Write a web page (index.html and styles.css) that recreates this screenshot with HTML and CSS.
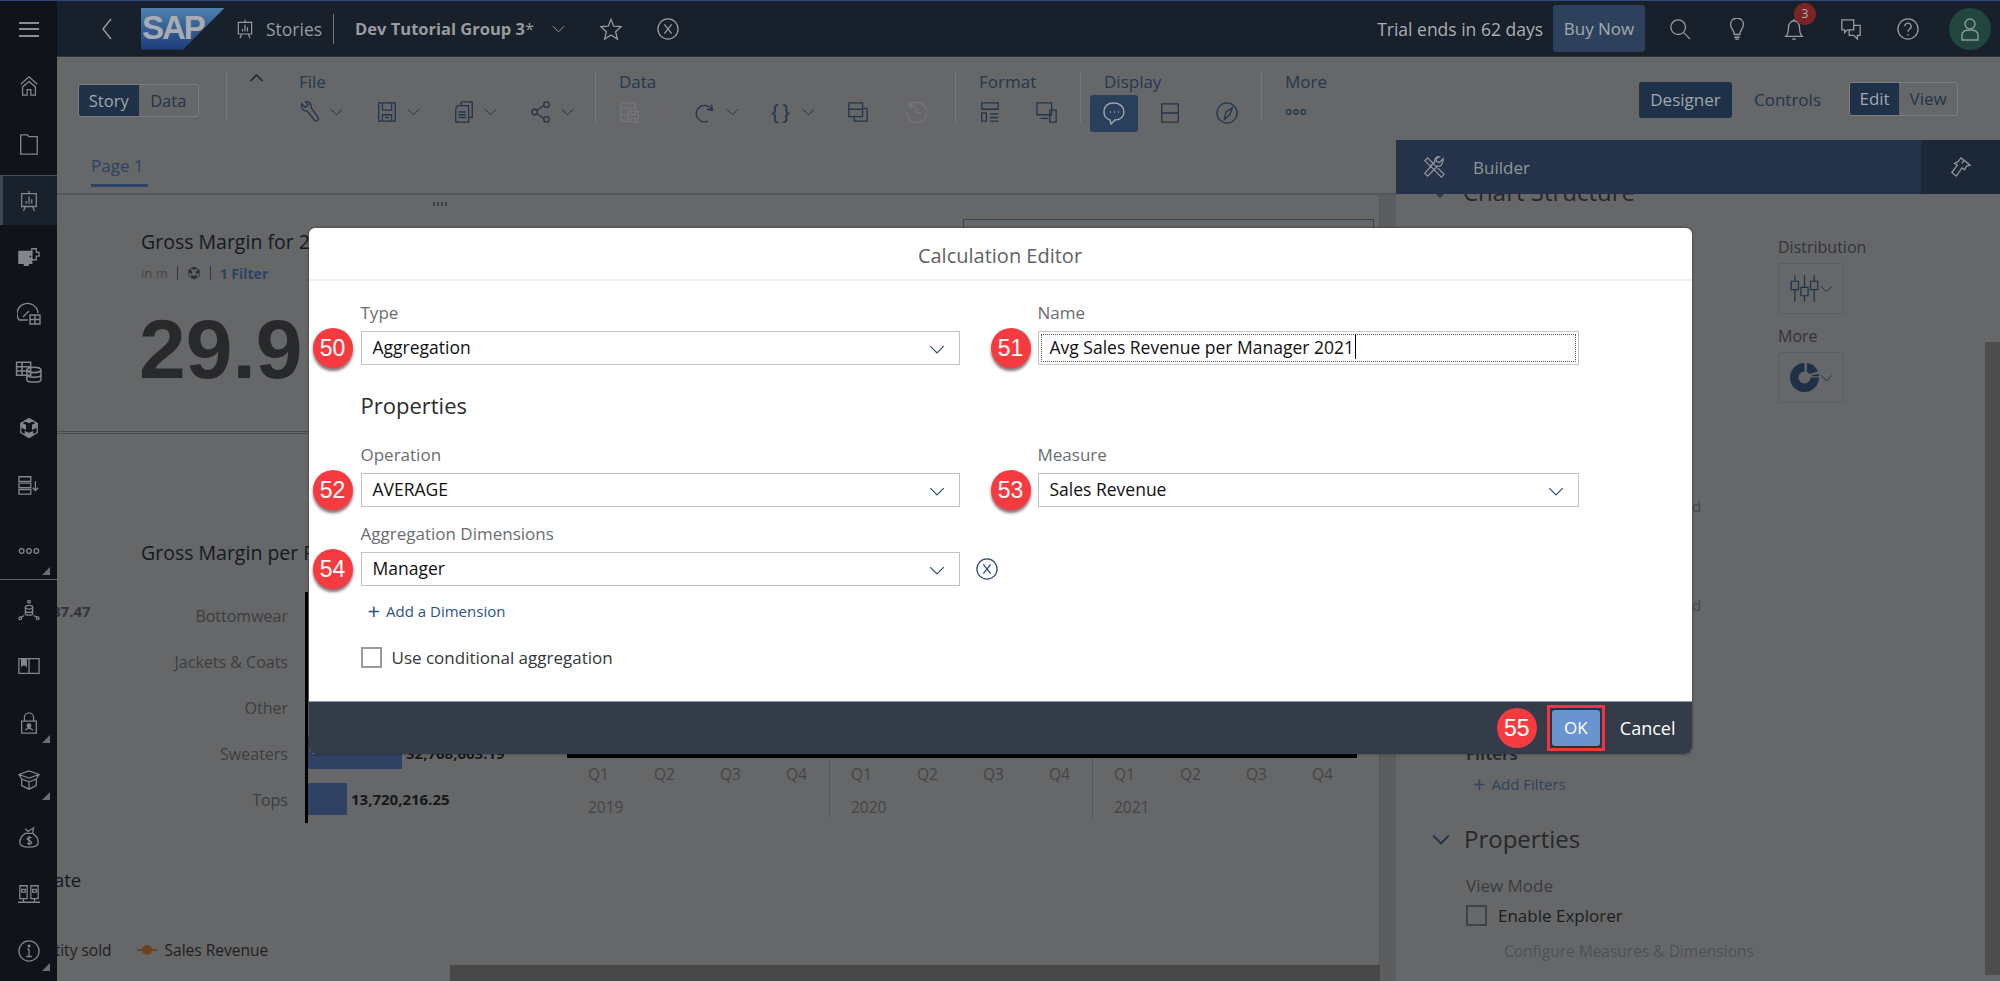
FILE: index.html
```html
<!DOCTYPE html>
<html lang="en">

<head>
    <meta charset="UTF-8">
    <title>Calculation Editor</title>
    <link rel="stylesheet" href="styles.css">
</head>

<body>
    <svg class="sprite" xmlns="http://www.w3.org/2000/svg">
        <symbol id="i-home" viewBox="0 0 24 24"><path d="M12 2 3 10M12 2l9 8M12 7l-7 6v9h5v-6h4v6h5v-9z"/></symbol>
        <symbol id="i-folder" viewBox="0 0 24 24"><path d="M3 2h7l2 2h9v19H3z"/></symbol>
        <symbol id="i-story" viewBox="0 0 24 24"><path d="M12 1v3M4 4h16v14H4zM8 18l-2 5M16 18l2 5M9 15v-3M12 15V7M15 15v-5"/></symbol>
        <symbol id="i-puzzle" viewBox="0 0 24 24"><path class="fill" d="M1 6h14v4h-3v3h3v6h-4v2H7v-2H1z"/><path d="M15 3h5v4h3v4h-3v4h-5z"/></symbol>
        <symbol id="i-gauge" viewBox="0 0 24 24"><path d="M2 18a10.500 10.500 0 1 1 19-7M2 18h9M6 15l6-6"/><path d="M13 13h10v9H13zM13 17.500h10M18 13v9"/></symbol>
        <symbol id="i-table" viewBox="0 0 24 24"><path d="M1 4h13v12H1zM1 8h13M1 12h13M6 4v12"/><ellipse cx="17" cy="11" rx="6.500" ry="2.500"/><path d="M10.500 11v9c0 3 13 3 13 0v-9M10.500 15.500c0 3 13 3 13 0"/></symbol>
        <symbol id="i-cube" viewBox="0 0 24 24"><path class="fill" d="M12 2l4 2-4 2-4-2zM4 7l4 2v4l-4-2zM20 7l-4 2v4l4-2zM12 18l4-2v4l-4 2zM12 18l-4-2v4l4 2z"/><path d="M12 2l9 5v10l-9 5-9-5V7z"/></symbol>
        <symbol id="i-list" viewBox="0 0 24 24"><path d="M1 3h13v5H1zM1 10h13v5H1zM1 17h13v5H1zM19 8v10M16 15l3 3 3-3"/></symbol>
        <symbol id="i-dots" viewBox="0 0 24 24"><circle cx="4" cy="12" r="2.500"/><circle cx="12" cy="12" r="2.500"/><circle cx="20" cy="12" r="2.500"/></symbol>
        <symbol id="i-net" viewBox="0 0 24 24"><circle cx="12" cy="3" r="1.500"/><ellipse cx="12" cy="9" rx="4" ry="2"/><path d="M8 9v7c0 2 8 2 8 0V9M8 13c0 2 8 2 8 0M7 18l-4 2M17 18l4 2"/><circle cx="2.500" cy="21" r="1.500"/><circle cx="21.500" cy="21" r="1.500"/></symbol>
        <symbol id="i-book" viewBox="0 0 24 24"><path d="M1 4h22v16H1zM12 4v16"/><path class="fill" d="M4 4h5v8l-2.500-2L4 12z"/></symbol>
        <symbol id="i-lock" viewBox="0 0 24 24"><path d="M4 10h16v13H4zM7 10V6a5 5 0 0 1 10 0v4"/><circle class="fill" cx="12" cy="15" r="2"/><path d="M8 20c1-3 7-3 8 0"/></symbol>
        <symbol id="i-box" viewBox="0 0 24 24"><path d="M12 2 1 6l11 4 11-4zM1 6l3 5 8 3 8-3 3-5M4 11v7l8 4 8-4v-7M12 14v8"/></symbol>
        <symbol id="i-money" viewBox="0 0 24 24"><path d="M8 8C3 11 2 15 2 18c0 3 4 5 10 5s10-2 10-5c0-3-1-7-6-10zM8 8h8M8 3l3 3 6-4-1 6M15 13c-1-1-5-1-5 1s5 2 5 4-4 2-5 1M12 11v10"/></symbol>
        <symbol id="i-split" viewBox="0 0 24 24"><path d="M2 3h8v14H2zM14 3h8v14h-8zM4 7h4v3H4zM16 7h4v3h-4zM6 17v4M18 17v4M0 21h24"/></symbol>
        <symbol id="i-info" viewBox="0 0 24 24"><circle cx="12" cy="12" r="11"/><path d="M12 10v8M9 18h6M10 10h2"/><circle class="fill" cx="12" cy="6.500" r="1"/></symbol>
        <symbol id="i-chev" viewBox="0 0 14 8"><path d="M1 1l6 6 6-6"/></symbol>
        <symbol id="i-back" viewBox="0 0 12 22"><path d="M10 1 2 11l8 10"/></symbol>
        <symbol id="i-star" viewBox="0 0 24 24"><path d="M12 1.500l3 7.500 8 .5-6 5.500 2 8-7-4.500L5 23l2-8-6-5.500 8-.5z"/></symbol>
        <symbol id="i-xc" viewBox="0 0 24 24"><circle cx="12" cy="12" r="11"/><path d="M8 7l8 10M16 7L8 17"/></symbol>
        <symbol id="i-wrench" viewBox="0 0 24 24"><path d="M3 3l4 4 3-3-3-3c4-1 7 2 6 6l8 11c1 2-2 5-4 3L9 11C5 12 2 7 3 3z"/></symbol>
        <symbol id="i-save" viewBox="0 0 24 24"><path d="M3 2h18v20H3zM7 2v8h10V2M7 22v-7h10v7M10 18h4"/></symbol>
        <symbol id="i-copy" viewBox="0 0 24 24"><path d="M9 5V1h12v17h-4M5 5h12v18H3V8zM6 12h8M6 15h8M6 18h8"/></symbol>
        <symbol id="i-share" viewBox="0 0 24 24"><circle cx="18" cy="4" r="3"/><circle cx="5" cy="12" r="3"/><circle cx="18" cy="20" r="3"/><path d="M8 10l7-5M8 14l7 5"/></symbol>
        <symbol id="i-db" viewBox="0 0 24 24"><ellipse cx="10" cy="5" rx="8" ry="3"/><path d="M2 5v14c0 3 6 4 8 3M2 12c0 3 6 4 8 3M18 5v4M10 11h11v12H10zM13 11v4h5v-4M13 23v-4h5v4"/></symbol>
        <symbol id="i-refresh" viewBox="0 0 24 24"><path d="M18 4l1 6-6-1M18 9A9 9 0 1 0 14 22"/></symbol>
        <symbol id="i-layers" viewBox="0 0 24 24"><path d="M2 2h15v15H2zM8 17v5h14V8h-5M2 9h15"/></symbol>
        <symbol id="i-history" viewBox="0 0 24 24"><path d="M5 5a11 11 0 1 1-3 7M5 1v5h5M12 7v6h5"/></symbol>
        <symbol id="i-format" viewBox="0 0 24 24"><path d="M3 2h18v7H3zM3 13h5v9H3zM12 14h9M12 18h9M12 22h9"/></symbol>
        <symbol id="i-device" viewBox="0 0 24 24"><path d="M1 2h16v13H1zM5 19h8M15 10h7v13h-7z"/></symbol>
        <symbol id="i-chat" viewBox="0 0 24 24"><path d="M12 2C5 2 2 6 2 11c0 4 3 7 6 8l1 4 4-4c6 0 9-4 9-8 0-5-4-9-10-9z"/><path d="M8 11h1M12 11h1M16 11h1"/></symbol>
        <symbol id="i-panels" viewBox="0 0 24 24"><path d="M3 2h18v20H3zM3 12h18"/></symbol>
        <symbol id="i-compass" viewBox="0 0 24 24"><circle cx="12" cy="12" r="11"/><path d="M18 6l-3 8-6 5 2-8z"/></symbol>
        <symbol id="i-search" viewBox="0 0 24 24"><circle cx="10" cy="10" r="8"/><path d="M16 16l7 7"/></symbol>
        <symbol id="i-bulb" viewBox="0 0 24 24"><path d="M9 18c0-5-4-6-4-11a7 7 0 0 1 14 0c0 5-4 6-4 11zM9 21h6M10 23h4"/></symbol>
        <symbol id="i-bell" viewBox="0 0 24 24"><path d="M3 20c3-3 3-6 3-10 0-4 3-7 6-7s6 3 6 7c0 4 0 7 3 10zM10 23h4M12 1v2"/></symbol>
        <symbol id="i-msg" viewBox="0 0 24 24"><path d="M2 2h13v11H8l-3 3v-3H2zM15 8h7v11h-3v4l-4-4h-5v-6"/></symbol>
        <symbol id="i-help" viewBox="0 0 24 24"><circle cx="12" cy="12" r="11"/><path d="M8.500 9a3.500 3.500 0 1 1 5 3.200c-1 .6-1.500 1.300-1.500 2.800M12 17.500v1.500"/></symbol>
        <symbol id="i-user" viewBox="0 0 24 24"><circle cx="12" cy="7" r="5"/><path d="M4 23v-5c0-3 3-5 8-5s8 2 8 5v5z"/></symbol>
        <symbol id="i-tools" viewBox="0 0 24 24"><path d="M2 5l3-3 6 6-3 3zM8 11l12 12 3-3L11 8M22 3l-4 4-3-1-1-3 4-2c-3-1-6 2-5 5L2 19l3 3 11-11c3 1 6-2 6-8z"/></symbol>
        <symbol id="i-brush" viewBox="0 0 24 24"><path d="M12 2l10 8-4 1-2 4-3-2-6 9-5-4 6-8-3-2 4-2zM15 5l-2 3"/></symbol>
        <symbol id="i-sliders" viewBox="0 0 24 24"><path d="M4 1v5M4 13v10M12 1v10M12 18v5M20 1v5M20 13v10M1 6h6v7H1zM9 11h6v7H9zM17 6h6v7h-6z"/></symbol>
        <symbol id="i-donut" viewBox="0 0 24 24"><path class="fill" d="M12 0a12 12 0 1 0 12 12h-7a5 5 0 1 1-5-5zM14 0a11 11 0 0 1 9 7l-7 2-2-2zM24 9v2h-6v-1z"/></symbol>
    </svg>

    <div class="shell">
        <nav class="side">
            <div class="side-item side-burger"><span class="burger"></span></div>
            <div class="side-item side-home"><svg class="ico ico-22"><use href="#i-home"/></svg></div>
            <div class="side-item"><svg class="ico ico-22"><use href="#i-folder"/></svg></div>
            <div class="side-item side-active"><svg class="ico ico-22"><use href="#i-story"/></svg></div>
            <div class="side-item"><svg class="ico ico-22"><use href="#i-puzzle"/></svg></div>
            <div class="side-item"><svg class="ico ico-24"><use href="#i-gauge"/></svg></div>
            <div class="side-item"><svg class="ico ico-26"><use href="#i-table"/></svg></div>
            <div class="side-item"><svg class="ico ico-22"><use href="#i-cube"/></svg></div>
            <div class="side-item"><svg class="ico ico-22"><use href="#i-list"/></svg></div>
            <div class="side-item side-more"><svg class="ico ico-22"><use href="#i-dots"/></svg><span class="tri"></span></div>
            <div class="side-rule"></div>
            <div class="side-item"><svg class="ico ico-22"><use href="#i-net"/></svg></div>
            <div class="side-item"><svg class="ico ico-22"><use href="#i-book"/></svg></div>
            <div class="side-item"><svg class="ico ico-22"><use href="#i-lock"/></svg><span class="tri"></span></div>
            <div class="side-item"><svg class="ico ico-22"><use href="#i-box"/></svg><span class="tri"></span></div>
            <div class="side-item"><svg class="ico ico-22"><use href="#i-money"/></svg></div>
            <div class="side-item"><svg class="ico ico-22"><use href="#i-split"/></svg></div>
            <div class="side-item"><svg class="ico ico-22"><use href="#i-info"/></svg><span class="tri"></span></div>
        </nav>

        <div class="main">
            <header class="top">
                <svg class="ico ico-back"><use href="#i-back"/></svg>
                <div class="logo"><span>SAP</span></div>
                <svg class="ico ico-20 top-story"><use href="#i-story"/></svg>
                <span class="top-stories">Stories</span>
                <span class="top-title">Dev Tutorial Group 3<span class="top-star">*</span></span>
                <svg class="ico chev top-chev"><use href="#i-chev"/></svg>
                <svg class="ico ico-22 top-fav"><use href="#i-star"/></svg>
                <svg class="ico ico-22 top-close"><use href="#i-xc"/></svg>
                <div class="top-right">
                    <span class="trial">Trial ends in 62 days</span>
                    <span class="buy">Buy Now</span>
                    <svg class="ico ico-22 top-act"><use href="#i-search"/></svg>
                    <svg class="ico ico-22 top-act"><use href="#i-bulb"/></svg>
                    <div class="bell"><svg class="ico ico-22"><use href="#i-bell"/></svg><span class="bell-count">3</span></div>
                    <svg class="ico ico-22 top-act"><use href="#i-msg"/></svg>
                    <svg class="ico ico-22 top-act"><use href="#i-help"/></svg>
                    <div class="avatar"><svg class="ico ico-24"><use href="#i-user"/></svg></div>
                </div>
            </header>

            <section class="toolbar">
                <div class="seg seg-story"><span class="seg-on">Story</span><span>Data</span></div>
                <div class="group group-file">
                    <svg class="ico caret"><use href="#i-chev"/></svg>
                    <div>
                        <div class="group-label">File</div>
                        <div class="tools">
                            <div class="tool"><svg class="ico ico-22"><use href="#i-wrench"/></svg><svg class="ico chev"><use href="#i-chev"/></svg></div>
                            <div class="tool"><svg class="ico ico-22"><use href="#i-save"/></svg><svg class="ico chev"><use href="#i-chev"/></svg></div>
                            <div class="tool"><svg class="ico ico-22"><use href="#i-copy"/></svg><svg class="ico chev"><use href="#i-chev"/></svg></div>
                            <div class="tool"><svg class="ico ico-22"><use href="#i-share"/></svg><svg class="ico chev"><use href="#i-chev"/></svg></div>
                        </div>
                    </div>
                </div>
                <div class="group group-data">
                    <div class="group-label">Data</div>
                    <div class="tools">
                        <div class="tool tool-d"><svg class="ico ico-22"><use href="#i-db"/></svg><svg class="ico chev"><use href="#i-chev"/></svg></div>
                        <div class="tool tool-n"><svg class="ico ico-22"><use href="#i-refresh"/></svg><svg class="ico chev"><use href="#i-chev"/></svg></div>
                        <div class="tool tool-n"><span class="braces">{ }</span><svg class="ico chev"><use href="#i-chev"/></svg></div>
                        <div class="tool tool-n tool-s"><svg class="ico ico-22"><use href="#i-layers"/></svg></div>
                        <div class="tool tool-d"><svg class="ico ico-22"><use href="#i-history"/></svg></div>
                    </div>
                </div>
                <div class="group group-format">
                    <div class="group-label">Format</div>
                    <div class="tools">
                        <div class="tool tool-f"><svg class="ico ico-22"><use href="#i-format"/></svg></div>
                        <div class="tool tool-f"><svg class="ico ico-22"><use href="#i-device"/></svg></div>
                    </div>
                </div>
                <div class="group group-display">
                    <div class="group-label">Display</div>
                    <div class="tools tools-display">
                        <div class="tool-on"><svg class="ico ico-24"><use href="#i-chat"/></svg></div>
                        <div class="tool tool-f"><svg class="ico ico-22"><use href="#i-panels"/></svg></div>
                        <div class="tool tool-f"><svg class="ico ico-22"><use href="#i-compass"/></svg></div>
                    </div>
                </div>
                <div class="group group-more">
                    <div class="group-label">More</div>
                    <div class="tools"><svg class="ico ico-22"><use href="#i-dots"/></svg></div>
                </div>
                <div class="tb-right">
                    <span class="designer">Designer</span>
                    <span class="controls">Controls</span>
                    <div class="seg seg-edit"><span class="seg-on">Edit</span><span>View</span></div>
                </div>
            </section>

            <div class="work">
                <div class="story">
                    <div class="tabs"><span class="tab">Page 1</span></div>
                    <div class="canvas">
                        <div class="handle"></div>
                        <div class="widget-top">
                            <div class="kpi">
                                <div class="w-title">Gross Margin for 2</div>
                                <div class="w-sub"><span>in m</span><i></i><svg class="ico ico-14"><use href="#i-cube"/></svg><i></i><b>1 Filter</b></div>
                                <div class="kpi-num">29.9</div>
                            </div>
                            <div class="ghost-box"></div>
                        </div>
                        <div class="w-title w-title-2">Gross Margin per P</div>
                        <div class="chart">
                            <div class="stray">87.47</div>
                            <div class="cats">
                                <div>Bottomwear</div>
                                <div>Jackets &amp; Coats</div>
                                <div>Other</div>
                                <div>Sweaters</div>
                                <div>Tops</div>
                            </div>
                            <div class="bars">
                                <div></div>
                                <div></div>
                                <div></div>
                                <div><span class="bar bar-sw"></span><b>32,768,663.19</b></div>
                                <div><span class="bar bar-to"></span><b>13,720,216.25</b></div>
                            </div>
                            <div class="time">
                                <div class="year">
                                    <div class="qs"><span>Q1</span><span>Q2</span><span>Q3</span><span>Q4</span></div>
                                    <div class="yr">2019</div>
                                </div>
                                <div class="year">
                                    <div class="qs"><span>Q1</span><span>Q2</span><span>Q3</span><span>Q4</span></div>
                                    <div class="yr">2020</div>
                                </div>
                                <div class="year year-last">
                                    <div class="qs"><span>Q1</span><span>Q2</span><span>Q3</span><span>Q4</span></div>
                                    <div class="yr">2021</div>
                                </div>
                            </div>
                        </div>
                        <div class="w-title w-title-3">ate</div>
                        <div class="legend"><span>Quantity sold</span><i class="mark"></i><span>Sales Revenue</span></div>
                    </div>
                    <div class="scroll-x"></div>
                </div>

                <aside class="panel">
                    <div class="panel-head">
                        <svg class="ico ico-22"><use href="#i-tools"/></svg>
                        <span class="panel-name">Builder</span>
                        <div class="panel-alt"><svg class="ico ico-22"><use href="#i-brush"/></svg></div>
                    </div>
                    <div class="panel-body">
                        <div class="p-section p-chart"><svg class="ico p-chev"><use href="#i-chev"/></svg>Chart Structure</div>
                        <div class="p-label p-dist">Distribution</div>
                        <div class="p-btn"><svg class="ico p-ico"><use href="#i-sliders"/></svg><svg class="ico chev"><use href="#i-chev"/></svg></div>
                        <div class="p-label p-more">More</div>
                        <div class="p-btn"><svg class="ico p-ico solid"><use href="#i-donut"/></svg><svg class="ico chev"><use href="#i-chev"/></svg></div>
                        <div class="p-stub p-stub-1">d</div>
                        <div class="p-stub p-stub-2">d</div>
                        <div class="p-filters">Filters</div>
                        <div class="p-add"><span class="plus">+</span>Add Filters</div>
                        <div class="p-section p-props"><svg class="ico p-chev"><use href="#i-chev"/></svg>Properties</div>
                        <div class="p-view">View Mode</div>
                        <div class="p-check"><span class="box box-dim"></span>Enable Explorer</div>
                        <div class="p-config">Configure Measures &amp; Dimensions</div>
                    </div>
                    <div class="scroll-y"></div>
                </aside>
            </div>
        </div>
    </div>

    <div class="overlay">
        <div class="modal">
            <div class="modal-title">Calculation Editor</div>
            <div class="modal-body">
                <div class="cell">
                    <label>Type</label>
                    <div class="field"><span class="badge">50</span>Aggregation<svg class="ico field-chev"><use href="#i-chev"/></svg></div>
                </div>
                <div class="cell">
                    <label>Name</label>
                    <div class="field field-focus"><span class="badge badge-r">51</span><span class="typed">Avg Sales Revenue per Manager 2021</span></div>
                </div>
                <h3 class="props">Properties</h3>
                <div class="cell cell-op">
                    <label>Operation</label>
                    <div class="field"><span class="badge">52</span>AVERAGE<svg class="ico field-chev"><use href="#i-chev"/></svg></div>
                </div>
                <div class="cell cell-op">
                    <label>Measure</label>
                    <div class="field"><span class="badge badge-r">53</span>Sales Revenue<svg class="ico field-chev"><use href="#i-chev"/></svg></div>
                </div>
                <div class="cell cell-dim">
                    <label>Aggregation Dimensions</label>
                    <div class="dim-row">
                        <div class="field"><span class="badge">54</span>Manager<svg class="ico field-chev"><use href="#i-chev"/></svg></div>
                        <svg class="ico ico-22 dim-x"><use href="#i-xc"/></svg>
                    </div>
                    <div class="add-dim"><span class="plus">+</span>Add a Dimension</div>
                    <div class="cond"><span class="box"></span>Use conditional aggregation</div>
                </div>
            </div>
            <div class="modal-foot">
                <span class="badge badge-foot">55</span>
                <div class="ok-mark"><button class="ok">OK</button></div>
                <span class="cancel">Cancel</span>
            </div>
        </div>
    </div>
</body>

</html>
```

FILE: styles.css
```css
* {
    box-sizing: border-box;
}

html,
body {
    margin: 0;
    height: 100%;
    overflow: hidden;
}

body {
    position: relative;
    font-family: "Open Sans", "Liberation Sans", sans-serif;
    font-size: 15px;
    color: #1e2733;
    background: #666768;
}

.sprite {
    display: none;
}

.ico {
    display: block;
    flex: none;
    fill: none;
    stroke: currentColor;
    stroke-width: 1.4;
}

.ico .fill,
.fill {
    fill: currentColor;
}

.ico-14 { width: 14px; height: 14px; color: #2b2c2f; }
.ico-20 { width: 20px; height: 24px; }
.ico-22 { width: 22px; height: 22px; }
.ico-24 { width: 24px; height: 24px; }
.ico-26 { width: 27px; height: 26px; }

.chev {
    width: 13px;
    height: 8px;
    stroke-width: 1;
}

.shell {
    display: flex;
    height: 100%;
}

/* left rail */
.side {
    width: 57px;
    flex: none;
    position: relative;
    z-index: 3;
    background: #10141a;
    color: #83878c;
    border-top: 1px solid #2e4a78;
}

.side-item {
    position: relative;
    height: 57px;
    display: flex;
    align-items: center;
    justify-content: center;
}

.side-burger {
    height: 56px;
}

.burger {
    width: 20px;
    height: 15px;
    border-top: 2px solid #8b8e92;
    border-bottom: 2px solid #8b8e92;
    position: relative;
}

.burger::after {
    content: "";
    position: absolute;
    left: 0;
    right: 0;
    top: 4.500px;
    height: 2px;
    background: #8b8e92;
}

.side-home {
    height: 58px;
}

.side-active {
    height: 50px;
    margin-top: 3px;
    background: #18212c;
    border-top: 1px solid #4a4e54;
    border-left: 3px solid #3a4656;
    padding-right: 3px;
}

.side-active + .side-item {
    margin-top: 3px;
}

.side-more {
    height: 64px;
    margin-top: 6px;
}

.side-rule {
    height: 1px;
    background: #62666b;
    margin-top: -4px;
    margin-bottom: 2px;
}

.side-rule + .side-item {
    height: 55px;
}

.tri {
    position: absolute;
    right: 7px;
    bottom: 8px;
    width: 0;
    height: 0;
    border-left: 8px solid transparent;
    border-bottom: 8px solid #6a6e73;
}

.main {
    flex: 1;
    min-width: 0;
    display: flex;
    flex-direction: column;
}

/* shell header */
.top {
    height: 57px;
    flex: none;
    display: flex;
    align-items: center;
    background: #18202b;
    border-top: 1px solid #2e4a78;
    border-bottom: 1px solid #30353c;
    color: #9a9c9f;
}

.ico-back {
    width: 12px;
    height: 22px;
    margin-left: 44px;
}

.logo {
    width: 84px;
    height: 42px;
    margin-left: 28px;
    background: linear-gradient(#4d80ad, #1d3d7c);
    clip-path: polygon(0 0, 100% 0, 50% 100%, 0 100%);
    overflow: hidden;
}

.logo span {
    display: block;
    font-family: "Liberation Sans", sans-serif;
    font-weight: 700;
    font-size: 33px;
    line-height: 40px;
    letter-spacing: -2px;
    color: #a9adb1;
    padding-left: 1px;
}

.top-story {
    margin-left: 10px;
}

.top-stories {
    margin-left: 11px;
    padding-right: 11px;
    font-size: 17.500px;
    line-height: 30px;
    border-right: 1px solid #70757b;
}

.top-title {
    margin-left: 21px;
    font-size: 16.500px;
    font-weight: 700;
}

.top-star {
    font-weight: 400;
}

.top-chev {
    margin-left: 18px;
}

.top-fav {
    margin-left: 35px;
}

.top-close {
    margin-left: 35px;
}

.top-right {
    margin-left: auto;
    display: flex;
    align-items: center;
}

.trial {
    font-size: 17.500px;
    color: #adafb1;
}

.buy {
    width: 92px;
    height: 47px;
    margin-left: 10px;
    margin-right: 24px;
    background: #2e415c;
    border-radius: 3px;
    text-align: center;
    line-height: 47px;
    font-size: 17px;
    color: #a5a8ab;
}

.top-act {
    margin-right: 35px;
}

.bell {
    position: relative;
    margin-right: 35px;
}

.bell-count {
    position: absolute;
    left: 11px;
    top: -15px;
    width: 22px;
    height: 22px;
    border-radius: 50%;
    background: #7c2326;
    color: #b7b0b0;
    font-size: 12px;
    line-height: 22px;
    text-align: center;
}

.avatar {
    width: 42px;
    height: 42px;
    border-radius: 50%;
    background: #21463f;
    color: #8a9c95;
    display: flex;
    align-items: center;
    justify-content: center;
    margin-left: -5px;
    margin-right: 9px;
}

/* toolbar */
.toolbar {
    height: 83px;
    flex: none;
    display: flex;
    background: #666768;
    color: #24344a;
    padding-left: 21px;
}

.seg {
    display: flex;
    height: 33px;
    margin-top: 27px;
    border: 1px solid #7d7e80;
    border-radius: 3px;
    font-size: 16.500px;
    line-height: 31px;
    text-align: center;
}

.seg-story {
    width: 121px;
}

.seg span {
    flex: 1;
}

.seg-on {
    background: #1f3149;
    color: #a2a6ab;
    border-radius: 2px 0 0 2px;
}

.group {
    height: 50px;
    margin-top: 15px;
    padding-left: 23px;
    border-left: 1px solid #77787a;
    flex: none;
}

.group-file {
    display: flex;
    width: 369px;
    margin-left: 27px;
    padding-left: 22px;
}

.caret {
    width: 15px;
    height: 8px;
    margin-top: 2px;
    margin-right: 35px;
    stroke-width: 1.500;
    transform: rotate(180deg);
    stroke: #20242b;
}

.group-data { width: 360px; }
.group-format { width: 125px; }
.group-display { width: 181px; }
.group-more { width: 120px; }

.group-label {
    font-size: 17px;
    line-height: 20px;
    color: #27374d;
}

.tools {
    display: flex;
    align-items: center;
    margin-top: 5px;
    height: 30px;
}

.tool {
    width: 77px;
    display: flex;
    align-items: center;
    gap: 9px;
    flex: none;
}

.tool-n { width: 76px; }
.tool-s { width: 58px; }
.tool-f { width: 57px; }
.tool-d { width: 76px; color: #767779; }

.braces {
    width: 22px;
    font-size: 21px;
    line-height: 22px;
    letter-spacing: -1px;
}

.tools-display {
    margin-left: -14px;
    margin-top: 2px;
    height: 38px;
}

.tool-on {
    width: 48px;
    height: 37px;
    flex: none;
    border-radius: 3px;
    background: #2a3f5c;
    color: #a0a6ae;
    display: flex;
    align-items: center;
    justify-content: center;
    margin-right: 21px;
}

.tb-right {
    margin-left: auto;
    padding-right: 42px;
    display: flex;
    align-items: flex-start;
}

.designer {
    margin-top: 25px;
    width: 93px;
    height: 36px;
    background: #1f3149;
    color: #a2a6ab;
    border-radius: 3px;
    text-align: center;
    line-height: 36px;
    font-size: 17px;
}

.controls {
    margin-top: 25px;
    margin-left: 22px;
    width: 95px;
    line-height: 36px;
    font-size: 17px;
}

.seg-edit {
    width: 109px;
    margin-top: 25px;
    height: 34px;
    font-size: 17px;
}

.seg-edit .seg-on {
    flex: 0.850;
}

/* lower part */
.work {
    flex: 1;
    min-height: 0;
    display: flex;
}

.story {
    position: relative;
    width: 1339px;
    flex: none;
    display: flex;
    flex-direction: column;
    padding-right: 16px;
    background: #5c5d5e;
}

.tabs {
    height: 55px;
    flex: none;
    margin-right: -16px;
    padding-left: 34px;
    background: #666768;
    border-bottom: 2px solid #56575a;
}

.tab {
    display: inline-block;
    height: 47px;
    width: 57px;
    line-height: 52px;
    font-size: 17px;
    color: #2c4464;
    white-space: nowrap;
    border-bottom: 3px solid #2c4464;
}

.canvas {
    flex: 1;
    min-height: 0;
    background: #666768;
    border-right: 1px solid #55565a;
    position: relative;
}

.handle {
    height: 18px;
    width: 16px;
    margin-left: 376px;
    background: repeating-linear-gradient(90deg, #3e3f42 0 2px, transparent 2px 4px) 0 7px / 100% 4px no-repeat;
}

.widget-top {
    height: 221px;
    display: flex;
    justify-content: space-between;
    border-bottom: 3px double #4a4b4d;
}

.kpi {
    padding-left: 84px;
}

.w-title {
    font-size: 19.500px;
    line-height: 26px;
    color: #15191f;
    white-space: nowrap;
}

.kpi .w-title {
    margin-top: 16px;
}

.w-sub {
    display: flex;
    align-items: center;
    gap: 9px;
    margin-top: 8px;
    height: 20px;
    font-size: 13px;
    color: #454648;
}

.w-sub i {
    width: 1px;
    height: 14px;
    background: #36373a;
}

.w-sub b {
    font-size: 14px;
    color: #2c4464;
}

.kpi-num {
    font-family: "Liberation Sans", sans-serif;
    font-size: 84px;
    font-weight: 700;
    line-height: 100px;
    margin-top: 16px;
    margin-left: -2px;
    color: #28292b;
}

.ghost-box {
    width: 411px;
    height: 60px;
    margin-top: 6px;
    margin-right: 5px;
    border: 1px solid #32435c;
}

.w-title-2 {
    margin-top: 106px;
    padding-left: 84px;
}

.chart {
    display: flex;
    margin-top: 26px;
}

.stray {
    width: 60px;
    padding-top: 9px;
    font-weight: 700;
    font-size: 15px;
    line-height: 20px;
    color: #33343a;
    text-indent: -5px;
}

.cats {
    width: 171px;
    padding-top: 1px;
    font-size: 16px;
    color: #3d3e40;
    text-align: right;
    white-space: nowrap;
}

.cats div {
    height: 46px;
    line-height: 46px;
}

.bars {
    width: 262px;
    margin-left: 17px;
    flex: none;
    border-left: 3px solid #000;
}

.bars div {
    height: 46px;
    display: flex;
    align-items: center;
    gap: 4px;
    font-size: 15px;
    color: #17181a;
    white-space: nowrap;
}

.bar {
    display: block;
    height: 32px;
    background: #2f4263;
}

.bar-sw { width: 94px; }
.bar-to { width: 39px; }

.time {
    width: 790px;
    flex: none;
    display: flex;
    height: 66px;
    margin-top: 162px;
    border-top: 4px solid #000;
    color: #444547;
    font-size: 15.500px;
}

.year {
    width: 263px;
    height: 60px;
    padding-left: 21px;
    border-right: 1px solid #55565a;
}

.year-last {
    border-right: 0;
}

.qs {
    display: flex;
    margin-top: 5px;
}

.qs span {
    width: 66px;
    flex: none;
}

.yr {
    margin-top: 11px;
}

.w-title-3 {
    margin-top: 44px;
    margin-left: -3px;
    font-size: 18.500px;
}

.legend {
    display: flex;
    align-items: center;
    margin-top: 46px;
    margin-left: -42px;
    font-size: 15.500px;
    color: #1d1e21;
    white-space: nowrap;
}

.mark {
    width: 20px;
    height: 2px;
    margin: 0 8px 0 25px;
    background: #6d4223;
    position: relative;
}

.mark::after {
    content: "";
    position: absolute;
    left: 5px;
    top: -4px;
    width: 10px;
    height: 10px;
    border-radius: 50%;
    background: #6d4223;
}

.scroll-x {
    position: absolute;
    left: 393px;
    width: 930px;
    bottom: 0;
    height: 16px;
    background: #484849;
}

/* builder panel */
.panel {
    position: relative;
    flex: 1;
    display: flex;
    flex-direction: column;
    background: #666768;
    overflow: hidden;
}

.panel-head {
    position: relative;
    z-index: 1;
    height: 54px;
    flex: none;
    display: flex;
    align-items: center;
    padding-left: 27px;
    background: #243349;
    color: #939699;
}

.panel-name {
    margin-left: 28px;
    font-size: 17px;
}

.panel-alt {
    margin-left: auto;
    width: 79px;
    height: 54px;
    background: #1c2737;
    display: flex;
    align-items: center;
    justify-content: center;
}

.panel-body {
    padding-left: 70px;
    font-size: 15px;
    color: #2b2c2f;
}

.p-section {
    display: flex;
    align-items: center;
    font-size: 24px;
    line-height: 30px;
    color: #26272a;
    position: relative;
}

.p-chev {
    position: absolute;
    left: -32px;
    top: 10px;
    width: 18px;
    height: 11px;
    stroke-width: 1.500;
    stroke: #1f3149;
}

.p-chart {
    margin-top: -17px;
    margin-left: -3px;
}

.p-label {
    margin-left: 312px;
    line-height: 20px;
    font-size: 16px;
    color: #333438;
}

.p-dist {
    margin-top: 30px;
}

.p-more {
    margin-top: 12px;
}

.p-btn {
    width: 66px;
    height: 51px;
    margin-left: 312px;
    margin-top: 6px;
    border: 1px solid #5c5d5f;
    border-radius: 3px;
    display: flex;
    align-items: center;
    justify-content: center;
    gap: 1px;
    color: #1f3149;
}

.p-ico {
    width: 29px;
    height: 29px;
    stroke-width: 1;
}

.solid {
    fill: currentColor;
    stroke: none;
}

.p-stub {
    margin-left: 226px;
    line-height: 20px;
    color: #48494c;
}

.p-stub-1 {
    margin-top: 93px;
}

.p-stub-2 {
    margin-top: 79px;
}

.p-filters {
    margin-top: 129px;
    font-size: 16.500px;
    font-weight: 700;
    line-height: 20px;
}

.p-add {
    margin-top: 9px;
    margin-left: 7px;
    line-height: 20px;
    font-size: 15px;
    color: #32435c;
}

.plus {
    font-size: 22px;
    line-height: 20px;
    margin-right: 6px;
    vertical-align: -2px;
}

.p-props {
    margin-top: 30px;
    margin-left: -2px;
}

.p-view {
    margin-top: 22px;
    line-height: 20px;
    font-size: 17px;
    color: #3a3b3e;
}

.p-check {
    margin-top: 8px;
    display: flex;
    align-items: center;
    gap: 11px;
    font-size: 17px;
    color: #1c1d20;
}

.box {
    display: block;
    width: 21px;
    height: 21px;
    flex: none;
    background: #fff;
    border: 2px solid #9a9a9a;
}

.box-dim {
    background: transparent;
    border-color: #404144;
}

.p-config {
    margin-top: 14px;
    margin-left: 38px;
    line-height: 20px;
    font-size: 15.500px;
    color: #4d5157;
}

.scroll-y {
    position: absolute;
    right: 0;
    top: 202px;
    bottom: 6px;
    width: 15px;
    background: #4e4e4f;
}

/* dialog */
.overlay {
    position: absolute;
    inset: 0;
    z-index: 5;
    display: flex;
    align-items: center;
    justify-content: center;
}

.modal {
    width: 1383px;
    height: 526px;
    display: flex;
    flex-direction: column;
    background: #fff;
    border-radius: 6px;
    box-shadow: 0 0 3px rgba(0, 0, 0, 0.45);
}

.modal-title {
    height: 53px;
    flex: none;
    text-align: center;
    line-height: 56px;
    font-size: 20px;
    color: #5f6164;
    border-bottom: 2px solid #f0f0f0;
}

.modal-body {
    flex: 1;
    display: grid;
    grid-template-columns: 599px 541px;
    column-gap: 78px;
    align-content: start;
    padding: 22px 0 0 52px;
}

.cell label {
    display: block;
    height: 20px;
    line-height: 20px;
    margin-bottom: 8px;
    font-size: 17px;
    color: #6a6d70;
}

.field {
    position: relative;
    height: 34px;
    width: 100%;
    flex: none;
    padding-left: 11px;
    line-height: 31px;
    font-size: 17.500px;
    color: #111;
    border: 1px solid #c3c3c3;
}

.field-focus {
    padding-left: 11px;
    line-height: 30px;
    outline: 1px dotted #555;
    outline-offset: -4px;
}

.typed {
    padding-right: 1px;
    border-right: 1px solid #000;
}

.field-chev {
    position: absolute;
    right: 14px;
    top: 13px;
    width: 16px;
    height: 9px;
    stroke-width: 1;
    stroke: #2b4a78;
}

.badge {
    position: absolute;
    left: -49px;
    top: -4px;
    width: 40px;
    height: 40px;
    border-radius: 50%;
    background: #f63b40;
    color: #fff;
    text-align: center;
    font-family: "Liberation Sans", sans-serif;
    font-size: 23px;
    line-height: 40px;
    box-shadow: 0 3px 3px rgba(40, 0, 0, 0.55);
}

.badge-r {
    left: -48px;
}

.props {
    grid-column: 1 / -1;
    margin: 25px 0 1px;
    font-size: 22px;
    font-weight: 400;
    line-height: 30px;
    color: #2a2c2f;
}

.cell-op {
    margin-top: 24px;
}

.cell-dim {
    margin-top: 17px;
}

.dim-row {
    display: flex;
    align-items: center;
    width: 660px;
}

.dim-row .field {
    width: 599px;
}

.dim-x {
    margin-left: 16px;
    color: #2b4a78;
}

.add-dim {
    margin-top: 14px;
    margin-left: 7px;
    line-height: 20px;
    font-size: 15px;
    color: #2d5285;
}

.cond {
    margin-top: 25px;
    display: flex;
    align-items: center;
    gap: 10px;
    font-size: 17px;
    color: #32363a;
}

.modal-foot {
    position: relative;
    height: 53px;
    flex: none;
    display: flex;
    align-items: center;
    justify-content: flex-end;
    padding-right: 16px;
    background: #343c49;
    border-top: 1px solid #8e97a6;
    border-radius: 0 0 6px 6px;
}

.badge-foot {
    position: static;
    margin-right: 10px;
    flex: none;
    box-shadow: none;
}

.ok-mark {
    width: 58px;
    height: 46px;
    padding: 2px;
    border: 3px solid #f1353a;
    background: #2b3340;
}

.ok {
    display: block;
    width: 100%;
    height: 100%;
    padding: 0;
    border: 0;
    border-radius: 3px;
    background: #6a94cf;
    color: #fff;
    font-family: inherit;
    font-size: 17px;
}

.cancel {
    margin-left: 15px;
    font-size: 18px;
    color: #fff;
}
```
